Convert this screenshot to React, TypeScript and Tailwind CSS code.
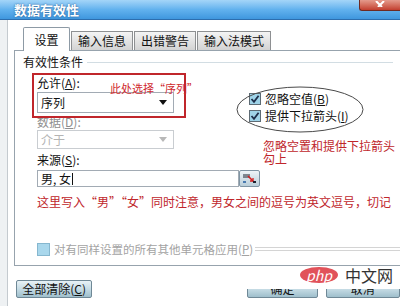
import React from 'react';

const CheckMark = () => (
    <svg width="12" height="12" viewBox="0 0 12 12">
        <rect x="0.5" y="0.5" width="11" height="11" fill="#9fd3e8" stroke="#5d6b74" />
        <path d="M2.5 6 L5 8.8 L9.6 2.8" fill="none" stroke="#1e2e4a" strokeWidth="1.8" />
    </svg>
);

const Arrow = ({ color }: { color: string }) => (
    <svg width="8" height="5" viewBox="0 0 8 5">
        <path d="M0 0 L8 0 L4 5 Z" fill={color} />
    </svg>
);

const Tab = ({ label, active }: { label: string; active?: boolean }) => {
    if (active) {
        return (
            <div className="relative z-10 -mb-px flex h-[24px] w-[47px] items-center justify-center rounded-t-[2px] border border-b-0 border-[#8d9aa5] bg-white text-[12px] text-[#111]">
                {label}
            </div>
        );
    }
    return (
        <div className="flex h-[19px] items-center justify-center border border-b-0 border-[#8e9092] bg-linear-to-b from-[#f4f4f4] to-[#d3d3d3] px-[6px] text-[12px] text-[#111]">
            {label}
        </div>
    );
};

const App = () => {
    return (
        <div className="relative h-[306px] w-[400px] overflow-hidden bg-[#eef1f3] font-['Noto_Sans_CJK_SC',sans-serif] text-[12px] leading-[14px] text-[#111]">
            {/* title bar */}
            <div className="flex h-[20px] border-b border-[#2d6eae] bg-linear-to-b from-[#a4d5f8] via-[#62b2ee] to-[#3f97de]">
                <div className="pl-[14px] pt-[2px] text-[13px] font-bold leading-[16px] text-white [text-shadow:0_0_2px_#1c4f86]">
                    数据有效性
                </div>
                <div className="ml-auto flex h-[11px] w-[41px] items-start justify-center rounded-bl-[3px] border-b border-l border-[#6e2a22] bg-linear-to-b from-[#e49a8c] to-[#c23d2e]">
                    <svg width="10" height="6" viewBox="0 0 10 6" className="mt-[1px]">
                        <path d="M1 0 L5 4 L9 0 M3 6 L5 4 L7 6" stroke="#fff" strokeWidth="2" fill="none" />
                    </svg>
                </div>
            </div>

            {/* dialog body */}
            <div className="ml-[7px] h-[286px] border-l border-[#c4cacf] bg-white">
                <div className="flex items-end pl-[15px] pt-[7px]">
                    <Tab label="设置" active />
                    <div className="flex items-end">
                        <div className="ml-[1px]"><Tab label="输入信息" /></div>
                        <div className="ml-[1px]"><Tab label="出错警告" /></div>
                        <div className="ml-[1px]"><Tab label="输入法模式" /></div>
                    </div>
                </div>

                {/* tab page */}
                <div className="ml-[6px] flex h-[216px] flex-col border-b border-l border-t border-[#97a3ad] bg-white">
                    <div className="flex items-center pl-[8px] pt-[4px]">
                        <span>有效性条件</span>
                        <div className="ml-[4px] mr-[7px] flex-1 border-t border-[#d2dde3]" />
                    </div>

                    <div className="flex pl-[22px]">
                        <div className="flex w-[137px] flex-col">
                            <div className="mt-[7px]">允许(<span className="underline">A</span>):</div>
                            <div className="mt-[2px] flex h-[21px] items-center justify-between border border-[#a2abb4] bg-white pl-[3px] pr-[6px]">
                                <span>序列</span>
                                <Arrow color="#111" />
                            </div>
                            <div className="mt-[2px] text-[#8e8e8e]">数据(<span className="underline">D</span>):</div>
                            <div className="mt-[1px] flex h-[19px] items-center justify-between border border-[#c9cdd1] bg-white pl-[3px] pr-[6px] text-[#b4b4b4]">
                                <span>介于</span>
                                <Arrow color="#b8b8b8" />
                            </div>
                        </div>
                        <div className="ml-[75px] flex flex-col">
                            <div className="mt-[23px] flex items-center gap-[4px]">
                                <CheckMark />
                                <span>忽略空值(<span className="underline">B</span>)</span>
                            </div>
                            <div className="mt-[3px] flex items-center gap-[4px]">
                                <CheckMark />
                                <span>提供下拉箭头(<span className="underline">I</span>)</span>
                            </div>
                        </div>
                    </div>

                    <div className="mt-[4px] pl-[22px]">来源(<span className="underline">S</span>):</div>
                    <div className="mt-[3px] flex pl-[22px]">
                        <div className="flex h-[17px] w-[202px] items-center border border-[#a2abb4] pl-[3px]">
                            <span>男, 女</span>
                            <span className="ml-[1px] h-[12px] w-px bg-[#111]" />
                        </div>
                        <div className="flex h-[17px] w-[21px] items-center justify-center rounded-[2px] border border-[#7f94a3] bg-linear-to-b from-[#eef4f7] to-[#b9ced9]">
                            <svg width="15" height="11" viewBox="0 0 15 11">
                                <path d="M1 2 H8 M1 4 H8" stroke="#1c2430" strokeWidth="1" />
                                <path d="M6 3 L11 8" stroke="#d42020" strokeWidth="1.6" />
                                <path d="M8 8 L11 8 L11 5" stroke="#d42020" strokeWidth="1.3" fill="none" />
                                <rect x="11" y="8" width="3" height="2" fill="#1c2430" />
                                <rect x="1" y="8" width="3" height="2" fill="#4a7bb0" />
                            </svg>
                        </div>
                    </div>
                    <div className="mt-[8px] whitespace-nowrap pl-[22px] text-[#c0262b]">
                        这里写入“男”“女”同时注意，男女之间的逗号为英文逗号，切记
                    </div>

                    <div className="mt-[33px] flex items-center pl-[22px]">
                        <span className="h-[13px] w-[13px] border border-[#86b7cf] bg-[#a9d7ec]" />
                        <span className="ml-[4px] whitespace-nowrap text-[11.5px] text-[#a3a3a3]">对有同样设置的所有其他单元格应用(<span className="underline">P</span>)</span>
                        <div className="ml-[2px] h-[4px] flex-1 border-b border-t border-[#d4d4d4]" />
                    </div>
                </div>

                {/* buttons */}
                <div className="mt-[14px] flex pl-[8px]">
                    <button className="h-[18px] w-[78px] rounded-[2px] border border-[#6f8896] bg-linear-to-b from-[#e8f2f6] via-[#c6dce5] to-[#9fbfcc] text-[12px] leading-[14px] text-[#111]">
                        全部清除(<span className="underline">C</span>)
                    </button>
                    <button className="ml-[155px] h-[18px] w-[72px] rounded-[2px] border border-[#6f8896] bg-linear-to-b from-[#e8f2f6] via-[#c6dce5] to-[#9fbfcc] text-[12px] leading-[14px] text-[#111]">
                        确定
                    </button>
                    <button className="ml-[8px] h-[18px] w-[76px] rounded-[2px] border border-[#6f8896] bg-linear-to-b from-[#e8f2f6] via-[#c6dce5] to-[#9fbfcc] text-[12px] leading-[14px] text-[#111]">
                        取消
                    </button>
                </div>
            </div>

            {/* red annotations */}
            <div className="absolute left-[32px] top-[73px] h-[45px] w-[154px] border-2 border-[#c0262b]" />
            <div className="absolute left-[110px] top-[81px] whitespace-nowrap text-[11px] leading-[14px] text-[#d02a2e]">
                此处选择“序列”
            </div>
            <svg className="absolute left-[236px] top-[86px]" width="128" height="47" viewBox="0 0 128 47">
                <ellipse cx="64" cy="23.5" rx="63" ry="22.5" fill="none" stroke="#4a4a4a" strokeWidth="1" />
            </svg>
            <div className="absolute left-[263px] top-[139px] text-[12px] leading-[13px] text-[#c0262b]">
                <div>忽略空置和提供下拉箭头</div>
                <div>勾上</div>
            </div>

            {/* watermark */}
            <div className="absolute left-[240px] top-[267px] flex h-[22px] w-[160px] items-start bg-white pl-[60px]">
                <div className="flex h-[16px] w-[38px] items-center justify-center rounded-[50%] bg-[#e1525a] text-[14px] italic leading-[16px] text-white">
                    php
                </div>
                <div className="ml-[7px] text-[16px] leading-[17px] text-[#333]">中文网</div>
            </div>
        </div>
    );
};

export default App;
